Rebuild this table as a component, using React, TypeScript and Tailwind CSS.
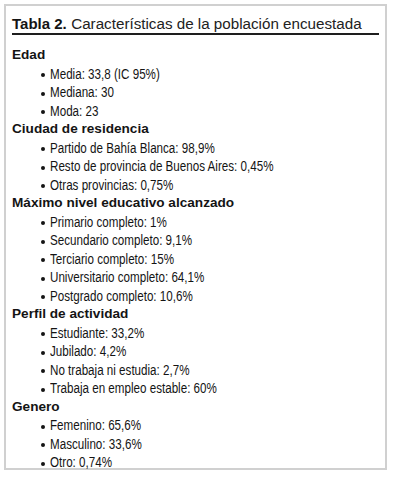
import React from "react";

const sections: { title: string; items: string[] }[] = [
  { title: "Edad", items: ["Media: 33,8 (IC 95%)", "Mediana: 30", "Moda: 23"] },
  {
    title: "Ciudad de residencia",
    items: [
      "Partido de Bahía Blanca: 98,9%",
      "Resto de provincia de Buenos Aires: 0,45%",
      "Otras provincias: 0,75%",
    ],
  },
  {
    title: "Máximo nivel educativo alcanzado",
    items: [
      "Primario completo: 1%",
      "Secundario completo: 9,1%",
      "Terciario completo: 15%",
      "Universitario completo: 64,1%",
      "Postgrado completo: 10,6%",
    ],
  },
  {
    title: "Perfil de actividad",
    items: [
      "Estudiante: 33,2%",
      "Jubilado: 4,2%",
      "No trabaja ni estudia: 2,7%",
      "Trabaja en empleo estable: 60%",
    ],
  },
  { title: "Genero", items: ["Femenino: 65,6%", "Masculino: 33,6%", "Otro: 0,74%"] },
];

export default function App() {
  return (
    <div className="w-[400px] h-[478px] bg-white pt-[4px] pl-[4px] font-['Liberation_Sans','Arial',sans-serif]">
      <div className="w-[383px] h-[466px] border-2 border-[#d0d0d0] px-[6px] pt-[9px] text-[#141414]">
        <div className="border-b-2 border-[#1e1e1e] leading-[18px] whitespace-nowrap">
          <span className="font-bold text-[15px]">Tabla 2.</span>{" "}
          <span className="text-[15.2px] text-[#222]">
            Características de la población encuestada
          </span>
        </div>
        <div className="mt-[11px]">
          {sections.map((s) => (
            <div key={s.title}>
              <div className="font-bold text-[13.6px] leading-[18.5px] whitespace-nowrap">{s.title}</div>
              <ul>
                {s.items.map((it) => (
                  <li
                    key={it}
                    className="flex items-center pl-[29px] leading-[18.5px] text-[14px] whitespace-nowrap"
                  >
                    <span className="w-[4px] h-[4px] rounded-full bg-[#141414] mr-[5px] mt-[3px] shrink-0" />
                    <span className="inline-block origin-left scale-x-[0.83]">{it}</span>
                  </li>
                ))}
              </ul>
            </div>
          ))}
        </div>
      </div>
    </div>
  );
}
